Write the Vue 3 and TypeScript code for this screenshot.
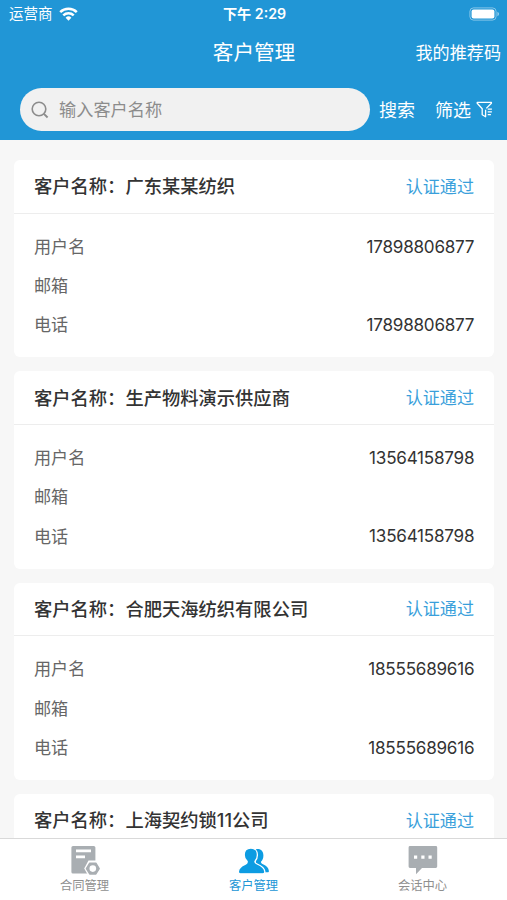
<script setup lang="ts">
interface Customer {
  name: string
  status: string
  fields?: { label: string; value: string }[]
}

const contact = (username: string, email: string, phone: string) => [
  { label: '用户名', value: username },
  { label: '邮箱', value: email },
  { label: '电话', value: phone },
]

const customers: Customer[] = [
  { name: '广东某某纺织', status: '认证通过', fields: contact('17898806877', '', '17898806877') },
  { name: '生产物料演示供应商', status: '认证通过', fields: contact('13564158798', '', '13564158798') },
  { name: '合肥天海纺织有限公司', status: '认证通过', fields: contact('18555689616', '', '18555689616') },
  { name: '上海契约锁11公司', status: '认证通过' },
]
</script>

<template>
  <div class="screen">
    <header class="top">
      <div class="status-bar">
        <div class="carrier">
          <span>运营商</span>
          <svg class="wifi" viewBox="0 0 19 14" width="19" height="14">
            <g fill="none" stroke="#fff" stroke-width="2.5">
              <path d="M1.2 5.1a11.8 11.8 0 0 1 16.6 0" />
              <path d="M4.3 8.3a7.4 7.4 0 0 1 10.4 0" />
            </g>
            <path d="M6.6 10.7a4.2 4.2 0 0 1 5.8 0L9.5 13.7z" fill="#fff" />
          </svg>
        </div>
        <div class="clock">下午 2:29</div>
        <div class="power">
          <svg viewBox="0 0 31 14" width="31" height="14">
            <rect x=".9" y=".9" width="26.2" height="12.2" rx="3.6" fill="none" stroke="#fff" stroke-opacity=".45" />
            <rect x="2.6" y="2.6" width="22.8" height="8.8" rx="2" fill="#fff" />
            <path d="M28.4 4.8c2.2.8 2.2 3.6 0 4.4z" fill="#fff" fill-opacity=".5" />
          </svg>
        </div>
      </div>
      <nav class="title-bar">
        <h1>客户管理</h1>
        <a class="referral">我的推荐码</a>
      </nav>
      <div class="search-row">
        <div class="search-box">
          <svg viewBox="0 0 18 18" width="18" height="18" fill="none" stroke="#8c8c8c" stroke-width="1.6">
            <circle cx="8" cy="8" r="6.8" />
            <path d="M12.9 12.9l3.700 3.600" stroke-width="1.9" />
          </svg>
          <span class="lift">输入客户名称</span>
        </div>
        <span class="search-btn lift">搜索</span>
        <span class="filter-btn">
          <span class="lift">筛选</span>
          <svg viewBox="0 0 17 17" width="17" height="17" fill="none" stroke="#fff" stroke-width="1.3">
            <path d="M10.3 7.4L15.4 2.3V1.3H1.2v1l5 5.4v6.1l3.4 1.9v-7" stroke-linejoin="round" />
            <path d="M11.7 8.2h4.2M11.7 10.9h4.2M11.7 13.6h3.2" />
          </svg>
        </span>
      </div>
    </header>

    <main class="list">
      <section v-for="c in customers" :key="c.name" class="card">
        <div class="card-head">
          <h2>客户名称：{{ c.name }}</h2>
          <span class="state">{{ c.status }}</span>
        </div>
        <dl v-if="c.fields" class="fields">
          <div v-for="f in c.fields" :key="f.label" class="field">
            <dt>{{ f.label }}</dt>
            <dd>{{ f.value }}</dd>
          </div>
        </dl>
      </section>
    </main>

    <footer class="tabs">
      <div class="tab">
        <svg viewBox="0 0 32 32" width="32" height="32">
          <path d="M4 2h20.800a1.600 1.600 0 0 1 1.600 1.600V29.500H4a1.600 1.600 0 0 1-1.600-1.600V3.600A1.600 1.600 0 0 1 4 2z" fill="#a9aeb2" />
          <path d="M7 6.900H22M7 12.900H16" stroke="#fff" stroke-width="2.800" />
          <path d="M19.500 16.400h8.600l4.300 8.200-4.300 7.400h-8.600l-4.300-7.400z" fill="#fff" />
          <path d="M20.700 19.200h6.200l3.300 5.400-3.300 5.400h-6.200l-3.300-5.400z" fill="#a9aeb2" stroke="#a9aeb2" stroke-width="1.400" stroke-linejoin="round" />
          <circle cx="23.800" cy="24.600" r="3.300" fill="#fff" />
        </svg>
        <span>合同管理</span>
      </div>
      <div class="tab active">
        <svg viewBox="0 0 32 32" width="32" height="32">
          <path d="M17.500 5.400c4.800-1.200 7.900 1.500 7.900 6.100 0 2.700-.9 4.700-2.300 6.100-.4 1.300.3 2 1.900 2.700 3.500 1.600 5.600 3.300 5.900 6.600.1.900-.4 1.400-1.200 1.400H18z" fill="#0d9ce2" />
          <path d="M12.800 4c4 0 6.600 2.800 6.600 6.900 0 2.800-1 5-2.400 6.400-.3 1.300.5 2 2.100 2.700 4.300 1.800 7.300 3.400 7.700 7.400.1 1.500-.6 2.400-1.900 2.400H2.300c-1.300 0-2-.9-1.900-2.400.4-4 3.400-5.600 6.600-7 1.900-.8 2.500-1.700 2.100-3.100-1.600-1.400-2.900-3.600-2.900-6.400 0-4.100 2.600-6.900 6.600-6.900z" fill="#0d9ce2" stroke="#fff" stroke-width="1.300" />
        </svg>
        <span>客户管理</span>
      </div>
      <div class="tab">
        <svg viewBox="0 0 32 32" width="32" height="32">
          <path d="M3 2h25.800a1.400 1.400 0 0 1 1.400 1.400v19.200a1.400 1.400 0 0 1-1.400 1.400H15l-6 6.200V24H3a1.400 1.400 0 0 1-1.400-1.400V3.400A1.400 1.400 0 0 1 3 2z" fill="#a9aeb2" />
          <path d="M7 11.500h3.200v3.200H7zM14.300 11.500h3.200v3.200h-3.200zM21.500 11.500h3.200v3.200h-3.200z" fill="#fff" />
        </svg>
        <span>会话中心</span>
      </div>
    </footer>
  </div>
</template>

<style>
body {
  margin: 0;
}
</style>

<style scoped>
.screen {
  display: flex;
  flex-direction: column;
  width: 507px;
  height: 900px;
  overflow: hidden;
  background: #f7f7f7;
  color: #333;
  font-family: Inter, "Noto Sans CJK SC", sans-serif;
}

h1,
h2,
dl,
dd {
  margin: 0;
}

svg {
  display: block;
  flex: none;
}

.lift {
  padding-bottom: 2px;
}

.top {
  flex: none;
  height: 140px;
  background: #2196d6;
  color: #fff;
}

.status-bar,
.title-bar {
  display: grid;
  grid-template-columns: 1fr auto 1fr;
  align-items: center;
}

.status-bar {
  height: 27px;
  padding: 0 7px 0 9px;
  font-size: 14.500px;
  line-height: 27px;
}

.carrier {
  display: flex;
  align-items: center;
  gap: 6px;
}

.clock {
  font-size: 14.200px;
  font-weight: 600;
}

.power {
  justify-self: end;
}

.title-bar {
  height: 50px;
  padding: 0 6px;
}

h1 {
  grid-column: 2;
  padding-left: 1px;
  font-size: 20.600px;
  font-weight: 400;
  line-height: 51px;
}

.referral {
  justify-self: end;
  padding-bottom: 2px;
  font-size: 17.100px;
}

.search-row {
  display: flex;
  align-items: center;
  height: 43px;
  margin-top: 11px;
  padding-left: 20px;
  font-size: 18px;
}

.search-box {
  display: flex;
  align-items: center;
  gap: 10px;
  box-sizing: border-box;
  width: 350px;
  height: 43px;
  padding-left: 11px;
  border-radius: 22px;
  background: #f1f1f1;
  color: #8c8c8c;
  font-size: 17.200px;
}

.search-btn {
  margin-left: 9px;
}

.filter-btn {
  display: flex;
  align-items: center;
  gap: 5px;
  margin-left: 20px;
}

.list {
  display: flex;
  flex: 1;
  flex-direction: column;
  gap: 14px;
  min-height: 0;
  padding: 20px 13px 0 14px;
  overflow: hidden;
}

.card {
  flex: none;
  min-height: 197.300px;
  border-radius: 6px;
  background: #fff;
}

.card-head {
  display: flex;
  align-items: center;
  justify-content: space-between;
  box-sizing: border-box;
  height: 53.500px;
  padding: 0 20px 2px;
  border-bottom: 1.500px solid #ededed;
}

h2 {
  font-size: 18.300px;
  font-weight: 500;
  white-space: nowrap;
}

.state {
  color: #3a9fdb;
  font-size: 17.100px;
}

.fields {
  padding: 13px 20px;
}

.field {
  display: flex;
  align-items: center;
  justify-content: space-between;
  height: 39.200px;
  font-size: 17.100px;
}

dt {
  padding-bottom: 1.500px;
  color: #666;
}

dd {
  margin-right: -0.300px;
  letter-spacing: -0.240px;
}

.tabs {
  display: grid;
  flex: none;
  grid-template-columns: repeat(3, 1fr);
  box-sizing: border-box;
  height: 62px;
  border-top: 1.500px solid #d9d9d9;
  background: #fff;
}

.tab {
  display: flex;
  flex-direction: column;
  align-items: center;
  gap: 1px;
  padding-top: 5px;
  color: #8f8f8f;
  font-size: 12.300px;
  line-height: 18px;
}

.tab.active {
  color: #2196d6;
}
</style>
